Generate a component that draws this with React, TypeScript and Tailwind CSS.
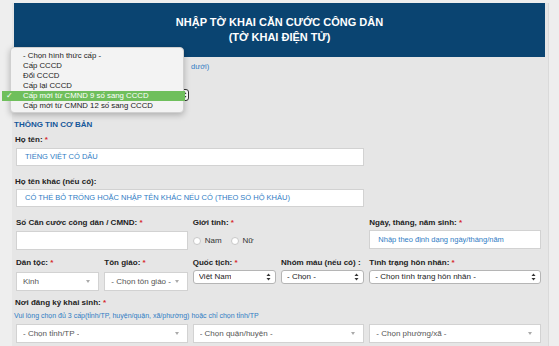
import React from 'react';

const font = { fontFamily: '"Liberation Sans", Arial, sans-serif' };

function Req() {
  return <span className="text-[#d7262b]"> *</span>;
}

function Label({ children, req }: { children: React.ReactNode; req?: boolean }) {
  return (
    <div className="text-[8px] leading-[10px] font-bold text-[#222] whitespace-nowrap">
      {children}
      {req && <Req />}
    </div>
  );
}

function Arrows() {
  return (
    <svg width="5" height="8" viewBox="0 0 5 8" className="shrink-0">
      <path d="M2.5 0.5 L4.5 3 L0.5 3 Z" fill="#333" />
      <path d="M2.5 7.5 L4.5 5 L0.5 5 Z" fill="#333" />
    </svg>
  );
}

function NativeSelect({ text }: { text: string }) {
  return (
    <div className="h-[14px] bg-white border border-[#b5b5b5] rounded-[3px] flex items-center justify-between pl-[5px] pr-[4px] text-[8px] text-[#222]">
      <span className="truncate">{text}</span>
      <Arrows />
    </div>
  );
}

function Select2({ text }: { text: string }) {
  return (
    <div className="h-[19px] bg-white border border-[#d2d2d2] flex items-center justify-between pl-[6px] pr-[8px] text-[8px] text-[#555]">
      <span className="truncate">{text}</span>
      <svg width="4" height="3" viewBox="0 0 4 3" className="shrink-0">
        <path d="M0 0 L4 0 L2 3 Z" fill="#aaa" />
      </svg>
    </div>
  );
}

function TextInput({ text, h = 'h-[18px]' }: { text?: string; h?: string }) {
  return (
    <div className={`${h} bg-white border border-[#d2d2d2] flex items-center pl-[8px] text-[7.5px] text-[#2f7cc4] whitespace-nowrap overflow-hidden`}>
      {text}
    </div>
  );
}

function Radio({ label }: { label: string }) {
  return (
    <div className="flex items-center gap-[4px]">
      <span className="w-[8px] h-[8px] rounded-full bg-white border border-[#c8c8c8]" />
      <span className="text-[8px] text-[#333]">{label}</span>
    </div>
  );
}

export default function App() {
  const options = [
    '- Chọn hình thức cấp -',
    'Cấp CCCD',
    'Đổi CCCD',
    'Cấp lại CCCD',
  ];
  return (
    <div className="relative w-[559px] h-[346px] overflow-hidden bg-[#eeeeee]" style={font}>
      <div className="ml-[12px] mt-[3px] w-[537px] h-[343px] bg-[#e6e6e6] border-r border-[#dadada]">
        {/* Header */}
        <div className="ml-[2px] w-[531px] h-[54px] bg-[#0a4471] flex flex-col items-center justify-center text-white font-bold text-[11px] leading-[15px]">
          <div>NHẬP TỜ KHAI CĂN CƯỚC CÔNG DÂN</div>
          <div>(TỜ KHAI ĐIỆN TỬ)</div>
        </div>

        <div className="pl-[4px] w-[529px]">
          {/* Hình thức cấp (behind popup) */}
          <div className="mt-[5px] h-[10px] flex items-center">
            <div className="ml-[175px] text-[7.5px] text-[#2f7cc4] whitespace-nowrap">dưới)</div>
          </div>
          <div className="mt-[17px] w-[173px] h-[12px] bg-white border border-[#333] rounded-[3px] flex items-center justify-end pr-[1px]">
            <Arrows />
          </div>

          {/* Thông tin cơ bản */}
          <div className="mt-[19px] -ml-[2px] text-[8px] leading-[10px] font-bold text-[#15579a]">THÔNG TIN CƠ BẢN</div>

          <div className="mt-[5px] -ml-[1px]">
            <Label req>Họ tên:</Label>
          </div>
          <div className="mt-[3px] grid grid-cols-6 gap-x-[5px]">
            <div className="col-span-4">
              <TextInput text="TIẾNG VIỆT CÓ DẤU" />
            </div>
          </div>

          <div className="mt-[11px] -ml-[1px]">
            <Label>Họ tên khác (nếu có):</Label>
          </div>
          <div className="mt-[2px] grid grid-cols-6 gap-x-[5px]">
            <div className="col-span-4">
              <TextInput text="CÓ THỂ BỎ TRỐNG HOẶC NHẬP TÊN KHÁC NẾU CÓ (THEO SỔ HỘ KHẨU)" />
            </div>
          </div>

          {/* CMND / Giới tính / Ngày sinh */}
          <div className="mt-[11px] grid grid-cols-6 gap-x-[5px]">
            <div className="col-span-2">
              <Label req>Số Căn cước công dân / CMND:</Label>
              <div className="mt-[3px]">
                <TextInput h="h-[19px]" />
              </div>
            </div>
            <div className="col-span-2">
              <Label req>Giới tính:</Label>
              <div className="mt-[7px] flex items-center gap-[9px]">
                <Radio label="Nam" />
                <Radio label="Nữ" />
              </div>
            </div>
            <div className="col-span-2">
              <Label req>Ngày, tháng, năm sinh:</Label>
              <div className="mt-[2px]">
                <TextInput h="h-[19px]" text="Nhập theo định dạng ngày/tháng/năm" />
              </div>
            </div>
          </div>

          {/* Dân tộc ... */}
          <div className="mt-[8px] grid grid-cols-6 gap-x-[5px]">
            <div>
              <Label req>Dân tộc:</Label>
              <div className="mt-[4px]">
                <Select2 text="Kinh" />
              </div>
            </div>
            <div>
              <Label req>Tôn giáo:</Label>
              <div className="mt-[4px]">
                <Select2 text="- Chọn tôn giáo -" />
              </div>
            </div>
            <div>
              <Label req>Quốc tịch:</Label>
              <div className="mt-[2px]">
                <NativeSelect text="Việt Nam" />
              </div>
            </div>
            <div>
              <Label>Nhóm máu (nếu có) :</Label>
              <div className="mt-[2px]">
                <NativeSelect text="- Chọn -" />
              </div>
            </div>
            <div className="col-span-2">
              <Label req>Tình trạng hôn nhân:</Label>
              <div className="mt-[2px]">
                <NativeSelect text="- Chọn tình trạng hôn nhân -" />
              </div>
            </div>
          </div>

          {/* Nơi đăng ký khai sinh */}
          <div className="mt-[7px] -ml-[1px]">
            <Label req>Nơi đăng ký khai sinh:</Label>
          </div>
          <div className="mt-[3px] -ml-[2px] text-[7px] leading-[10px] text-[#2f7cc4] whitespace-nowrap">
            Vui lòng chọn đủ 3 cấp(tỉnh/TP, huyện/quận, xã/phường) hoặc chỉ chọn tỉnh/TP
          </div>
          <div className="mt-[3px] grid grid-cols-6 gap-x-[5px]">
            <div className="col-span-2">
              <Select2 text="- Chọn tỉnh/TP -" />
            </div>
            <div className="col-span-2">
              <Select2 text="- Chọn quận/huyện -" />
            </div>
            <div className="col-span-2">
              <Select2 text="- Chọn phường/xã -" />
            </div>
          </div>
        </div>
      </div>

      {/* Open select popup */}
      <div className="absolute left-[10px] top-[47px] w-[174px] rounded-[4px] bg-[#f3f3f3] border border-[#d0d0d0] shadow-[0_2px_6px_rgba(0,0,0,0.25)] pt-[3px] pb-[1px] text-[7.8px] leading-[10px] text-[#222]">
        {options.map((o) => (
          <div key={o} className="pl-[12px] h-[10px] whitespace-nowrap">
            {o}
          </div>
        ))}
        <div className="relative -ml-[9px] w-[183px] h-[10px] bg-[#6fbf5c] text-white pl-[21px] whitespace-nowrap">
          <span className="absolute left-[4px] top-0">✓</span>
          Cấp mới từ CMND 9 số sang CCCD
        </div>
        <div className="pl-[12px] h-[10px] whitespace-nowrap">Cấp mới từ CMND 12 số sang CCCD</div>
      </div>
    </div>
  );
}
